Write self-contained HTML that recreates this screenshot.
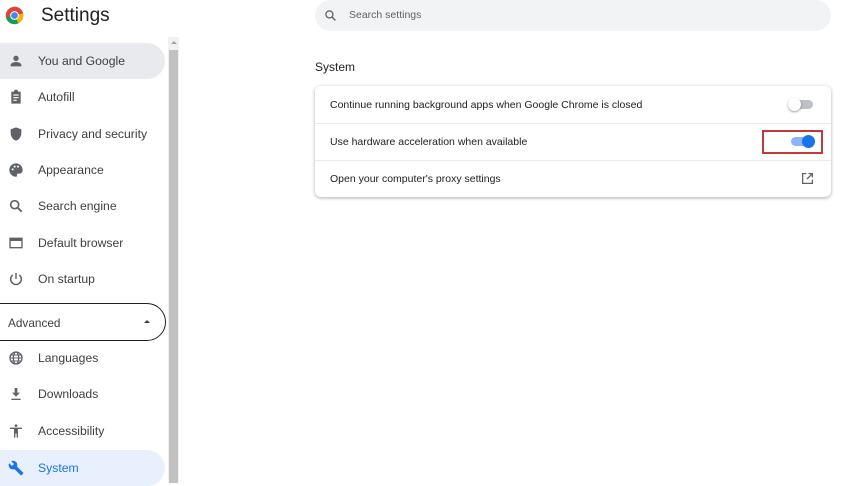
<!DOCTYPE html>
<html><head><style>
*{box-sizing:border-box;margin:0;padding:0}
body{width:850px;height:483px;overflow:hidden;background:#fff;font-family:"Liberation Sans",Arial,sans-serif;color:#202124;position:relative}
.abs{position:absolute}
.item{position:absolute;left:0;width:165px;height:36px;border-radius:0 18px 18px 0;font-size:12.2px;color:#3c4043;display:flex;align-items:center}
.item svg{position:absolute;left:8px;width:16px;height:16px;fill:#5f6368}
.item span{position:absolute;left:38px}
.row{position:absolute;left:0;right:0;height:37px;font-size:10.5px;color:#202124;display:flex;align-items:center;padding-left:15px}
</style></head><body>
<svg class="abs" style="left:5px;top:6px" width="19" height="19" viewBox="0 0 24 24">
<circle cx="12" cy="12" r="11" fill="#db4437"/>
<path d="M12 12 L1.5 15 A11 11 0 0 0 17 21.8Z" fill="#0f9d58"/>
<path d="M12 12 L17 21.8 A11 11 0 0 0 22.8 9Z" fill="#f4b400"/>
<path d="M12 12 L22.8 9 A11 11 0 0 0 12 1 Z" fill="#db4437"/>
<circle cx="12" cy="12" r="5.5" fill="#fff"/><circle cx="12" cy="12" r="4.3" fill="#4285f4"/></svg>
<div class="abs" style="left:41px;top:5px;font-size:19px;color:#202124">Settings</div>
<div class="abs" style="left:315px;top:0;width:516px;height:31px;background:#f1f3f4;border-radius:16px"></div>
<svg class="abs" style="left:324px;top:9px" width="13" height="13" viewBox="0 0 24 24"><circle cx="10" cy="10" r="6.5" fill="none" stroke="#5f6368" stroke-width="2.4"/><path d="M15 15l6 6" stroke="#5f6368" stroke-width="2.6"/></svg>
<div class="abs" style="left:349px;top:9px;font-size:10.5px;color:#5f6368">Search settings</div>

<div class="abs" style="left:168px;top:37px;width:11px;height:446px;background:#f1f1f1"></div>
<div class="abs" style="left:169px;top:50px;width:9px;height:433px;background:#c1c1c1"></div>
<div class="abs" style="left:171px;top:41px;width:0;height:0;border-left:3px solid transparent;border-right:3px solid transparent;border-bottom:3px solid #a3a3a3"></div>

<div class="item" style="top:43px;background:#e8eaed"><svg viewBox="0 0 24 24"><circle cx="12" cy="8" r="4"/><path d="M4 20v-2c0-3 5-4.5 8-4.5s8 1.5 8 4.5v2z"/></svg><span>You and Google</span></div>
<div class="item" style="top:79px"><svg viewBox="0 0 24 24"><path d="M5 4h4a3 3 0 0 1 6 0h4v18H5z"/><path d="M8 9h8M8 13h8M8 17h5" stroke="#fff" stroke-width="1.8"/></svg><span>Autofill</span></div>
<div class="item" style="top:116px"><svg viewBox="0 0 24 24"><path d="M12 2l8 3v6c0 5-3.5 9.5-8 11-4.5-1.5-8-6-8-11V5z"/></svg><span>Privacy and security</span></div>
<div class="item" style="top:152px"><svg viewBox="0 0 24 24"><path d="M12 2a10 10 0 0 0 0 20c1.5 0 2-1 1.5-2s0-2.5 1.5-2.5H17a5 5 0 0 0 5-5C22 6 17.5 2 12 2z"/><circle cx="7" cy="11" r="1.5" fill="#fff"/><circle cx="10" cy="7" r="1.5" fill="#fff"/><circle cx="15" cy="7" r="1.5" fill="#fff"/></svg><span>Appearance</span></div>
<div class="item" style="top:188px"><svg viewBox="0 0 24 24"><circle cx="10" cy="10" r="6" fill="none" stroke="#5f6368" stroke-width="2.5"/><path d="M14.5 14.5l6 6" stroke="#5f6368" stroke-width="2.8"/></svg><span>Search engine</span></div>
<div class="item" style="top:225px"><svg viewBox="0 0 24 24"><path d="M2 4h20v16H2z M4 9v9h16V9z" fill-rule="evenodd"/></svg><span>Default browser</span></div>
<div class="item" style="top:261px"><svg viewBox="0 0 24 24"><path d="M12 3v9" stroke="#5f6368" stroke-width="2.2"/><path d="M7 6a8 8 0 1 0 10 0" fill="none" stroke="#5f6368" stroke-width="2.2"/></svg><span>On startup</span></div>
<div class="abs" style="left:-20px;top:303px;width:186px;height:38px;border:1.5px solid #202124;border-radius:19px"></div>
<div class="abs" style="left:8px;top:316px;font-size:11.8px;color:#3c4043">Advanced</div>
<div class="abs" style="left:144px;top:320px;width:0;height:0;border-left:3.5px solid transparent;border-right:3.5px solid transparent;border-bottom:3.5px solid #3c4043"></div>
<div class="item" style="top:340px"><svg viewBox="0 0 24 24"><circle cx="12" cy="12" r="9" fill="none" stroke="#5f6368" stroke-width="2"/><ellipse cx="12" cy="12" rx="4" ry="9" fill="none" stroke="#5f6368" stroke-width="2"/><path d="M3 12h18M4.5 7.5h15M4.5 16.5h15" stroke="#5f6368" stroke-width="1.6"/></svg><span>Languages</span></div>
<div class="item" style="top:376px"><svg viewBox="0 0 24 24"><path d="M10 3h4v7h4l-6 6-6-6h4z"/><path d="M5 19h14v2H5z"/></svg><span>Downloads</span></div>
<div class="item" style="top:413px"><svg viewBox="0 0 24 24"><circle cx="12" cy="4" r="2"/><path d="M3 7h18v2h-6v13h-2v-6h-2v6H9V9H3z"/></svg><span>Accessibility</span></div>
<div class="item" style="top:450px;height:36px;background:#e8f0fe;color:#1a73e8"><svg viewBox="0 0 24 24" style="fill:#1a73e8"><path d="M22.7 19l-9.1-9.1c.9-2.3.4-5-1.5-6.9-2-2-5-2.4-7.4-1.3L9 6 6 9 1.6 4.7C.4 7.1.9 10.1 2.9 12.1c1.9 1.9 4.6 2.4 6.9 1.5l9.1 9.1c.4.4 1 .4 1.4 0l2.3-2.3c.5-.4.5-1.1.1-1.4z"/></svg><span>System</span></div>

<div class="abs" style="left:315px;top:60px;font-size:12px;color:#202124">System</div>
<div class="abs" style="left:315px;top:86px;width:516px;height:111px;background:#fff;border-radius:6px;box-shadow:0 1px 3px rgba(60,64,67,.3),0 1px 4px rgba(60,64,67,.15)">
<div class="row" style="top:0">Continue running background apps when Google Chrome is closed</div>
<div class="row" style="top:37px;border-top:1px solid #e8eaed">Use hardware acceleration when available</div>
<div class="row" style="top:74px;border-top:1px solid #e8eaed">Open your computer's proxy settings</div>
<div class="abs" style="left:474px;top:14px;width:24px;height:9px;border-radius:5px;background:#bdc1c6"></div>
<div class="abs" style="left:473px;top:12px;width:13px;height:13px;border-radius:50%;background:#fff;box-shadow:0 1px 2px rgba(0,0,0,.4)"></div>
<div class="abs" style="left:447px;top:44px;width:61px;height:24px;border:2px solid #c0393b"></div>
<div class="abs" style="left:476px;top:51px;width:24px;height:9px;border-radius:5px;background:#8ab4f8"></div>
<div class="abs" style="left:487px;top:49px;width:13px;height:13px;border-radius:50%;background:#1a73e8"></div>
<svg class="abs" style="left:486px;top:86px" width="13" height="13" viewBox="0 0 24 24"><path d="M10 3H3v18h18v-7" fill="none" stroke="#5f6368" stroke-width="2.4"/><path d="M14 3h7v7M21 3l-10 10" fill="none" stroke="#5f6368" stroke-width="2.4"/></svg>
</div>
</body></html>
